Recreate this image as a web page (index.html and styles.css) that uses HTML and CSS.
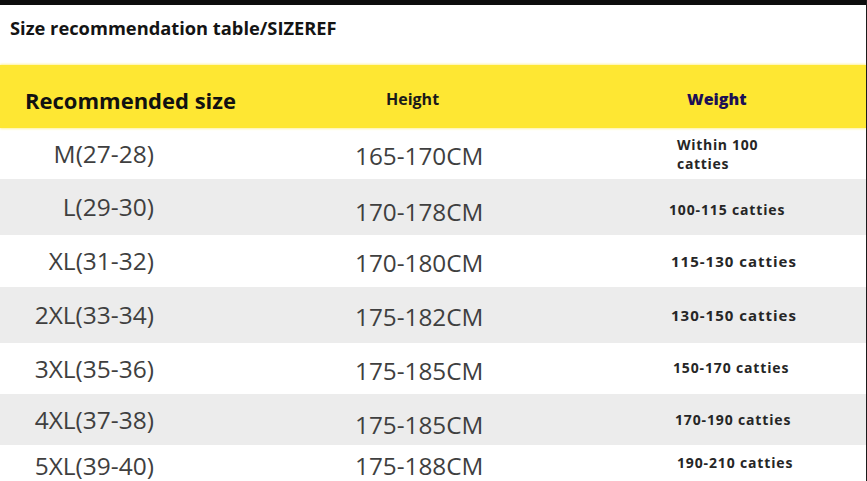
FILE: index.html
```html
<!DOCTYPE html>
<html>
<head>
<meta charset="utf-8">
<link rel="stylesheet" href="styles.css">
</head>
<body>
<div class="page">
  <div class="topbar"></div>
  <div class="title">Size recommendation table/SIZEREF</div>
  <div class="head">
    <div class="h-size">Recommended size</div>
    <div class="h-height">Height</div>
    <div class="h-weight">Weight</div>
  </div>
  <div class="row r1">
    <div class="c-size">M(27-28)</div>
    <div class="c-height">165-170CM</div>
    <div class="c-weight two off8">Within 100<br>catties</div>
  </div>
  <div class="row grey r2">
    <div class="c-size">L(29-30)</div>
    <div class="c-height low">170-178CM</div>
    <div class="c-weight down">100-115 catties</div>
  </div>
  <div class="row r3">
    <div class="c-size">XL(31-32)</div>
    <div class="c-height">170-180CM</div>
    <div class="c-weight big off2">115-130 catties</div>
  </div>
  <div class="row grey r4">
    <div class="c-size">2XL(33-34)</div>
    <div class="c-height">175-182CM</div>
    <div class="c-weight big off2">130-150 catties</div>
  </div>
  <div class="row r5">
    <div class="c-size">3XL(35-36)</div>
    <div class="c-height">175-185CM</div>
    <div class="c-weight off4 up">150-170 catties</div>
  </div>
  <div class="row grey r6">
    <div class="c-size">4XL(37-38)</div>
    <div class="c-height low">175-185CM</div>
    <div class="c-weight off6">170-190 catties</div>
  </div>
  <div class="row r7">
    <div class="c-size">5XL(39-40)</div>
    <div class="c-height">175-188CM</div>
    <div class="c-weight off8">190-210 catties</div>
  </div>
</div>
</body>
</html>
```
FILE: styles.css
```css
html, body {
  margin: 0;
  padding: 0;
  background: #ffffff;
}
body {
  font-family: "Open Sans", "Liberation Sans", sans-serif;
  width: 867px;
  height: 481px;
  overflow: hidden;
}
.page {
  width: 866px;
  height: 481px;
  border-right: 1px solid #1a1a1a;
  display: flex;
  flex-direction: column;
  overflow: hidden;
}
.topbar {
  height: 5px;
  background: #0d0d0d;
  flex: none;
}
.title {
  height: 60px;
  flex: none;
  padding-left: 10px;
  padding-top: 12px;
  box-sizing: border-box;
  font-weight: 700;
  font-size: 18.3px;
  line-height: 22px;
  color: #141414;
}
.head {
  height: 63px;
  flex: none;
  background: #fee733;
  box-shadow: 0 -1px 2px #fff3a0, 0 1px 2px #fff3a0;
  display: flex;
  align-items: center;
  font-weight: 700;
}
.h-size {
  width: 361px;
  padding-left: 25px;
  padding-top: 6px;
  box-sizing: border-box;
  font-size: 22px;
  color: #111;
}
.h-height {
  width: 302px;
  padding-left: 25px;
  padding-top: 4px;
  box-sizing: border-box;
  font-size: 16px;
  color: #1a1a1a;
}
.h-weight {
  padding-left: 24px;
  padding-top: 4px;
  font-size: 16px;
  font-weight: 800;
  color: #1b0f55;
}
.row {
  display: grid;
  grid-template-columns: 154px 201px 314px 1fr;
  align-items: center;
  flex: none;
  color: #3f3f3f;
}
.grey {
  background: #ececec;
}
.r1 { height: 51px; }
.r2 { height: 56px; }
.r3 { height: 52px; }
.r4 { height: 56px; }
.r5 { height: 51px; }
.r6 { height: 51px; }
.r7 {
  height: 36px;
  align-items: start;
  padding-top: 8px;
  box-sizing: border-box;
}
.c-size {
  grid-column: 1;
  text-align: right;
  font-size: 24.5px;
  line-height: 30px;
  white-space: nowrap;
}
.c-height {
  grid-column: 3;
  font-size: 24.3px;
  line-height: 30px;
  padding-top: 4px;
  white-space: nowrap;
}
.c-height.low {
  padding-top: 10px;
}
.r7 .c-size,
.r7 .c-height {
  line-height: 26px;
  padding-top: 0;
}
.c-weight {
  grid-column: 4;
  font-weight: 700;
  font-size: 14px;
  line-height: 19px;
  letter-spacing: 0.85px;
  color: #262626;
  white-space: nowrap;
}
.c-weight.two {
  letter-spacing: 0.7px;
}
.c-weight.big {
  font-size: 15px;
  letter-spacing: 1px;
}
.c-weight.down { padding-top: 5px; }
.c-weight.up { margin-top: -3px; }
.r7 .c-weight { margin-top: 0; }
.off2 { padding-left: 2px; }
.off4 { padding-left: 4px; }
.off6 { padding-left: 6px; }
.off8 { padding-left: 8px; }
```
